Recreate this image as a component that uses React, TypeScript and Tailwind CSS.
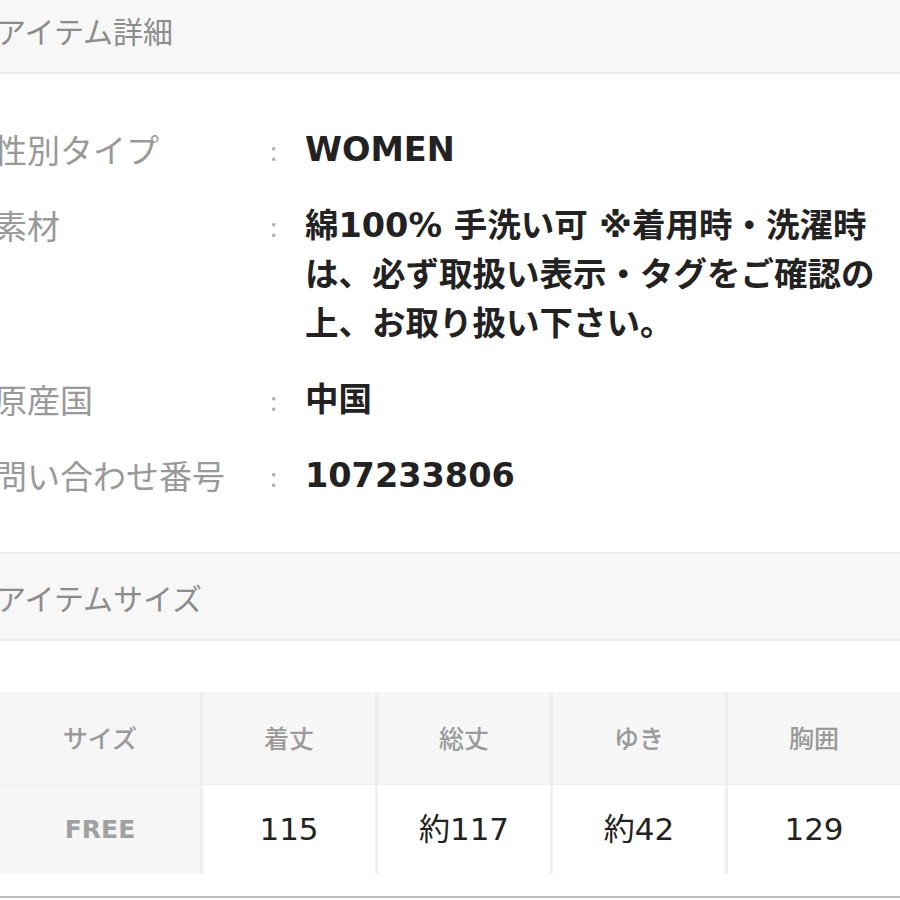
export default function App() {
  const details: { label: string; value: string[] }[] = [
    { label: "性別タイプ", value: ["WOMEN"] },
    {
      label: "素材",
      value: [
        "綿100% 手洗い可 ※着用時・洗濯時",
        "は、必ず取扱い表示・タグをご確認の",
        "上、お取り扱い下さい。",
      ],
    },
    { label: "原産国", value: ["中国"] },
    { label: "問い合わせ番号", value: ["107233806"] },
  ];

  const heads = ["サイズ", "着丈", "総丈", "ゆき", "胸囲"];
  const sizes = ["115", "約117", "約42", "129"];

  return (
    <div className="w-[900px] h-[900px] overflow-hidden bg-white font-['Noto_Sans_CJK_JP','Noto_Sans',sans-serif]">
      {/* Item details header */}
      <div className="flex h-[74px] items-center border-b-2 border-[#ececec] bg-[#f7f7f7]">
        <h2 className="-ml-[4px] -mt-[12px] text-[30px] leading-none text-[#8c8c8c]">アイテム詳細</h2>
      </div>

      <dl className="mt-[51px] flex flex-col gap-[27px]">
        {details.map((row) => (
          <div key={row.label} className="flex">
            <dt className="-ml-[6px] w-[276px] shrink-0 text-[33px] leading-[49px] text-[#999999]">{row.label}</dt>
            <span className="w-[35px] shrink-0 text-[26px] leading-[49px] text-[#b0b0b0]">:</span>
            <dd className="font-['DejaVu_Sans','Noto_Sans_CJK_JP',sans-serif] text-[33.5px] font-bold leading-[49px] text-[#222222]">
              {row.value.map((line) => (
                <div key={line} className="whitespace-nowrap">
                  {line}
                </div>
              ))}
            </dd>
          </div>
        ))}
      </dl>

      {/* Item size header */}
      <div className="mt-[52px] flex h-[89px] items-center border-y-2 border-[#ececec] bg-[#f7f7f7]">
        <h2 className="-ml-[4px] text-[30px] leading-none text-[#8c8c8c]">アイテムサイズ</h2>
      </div>

      <div className="mt-[51px] grid grid-cols-[200px_1fr_1fr_1fr_1fr] gap-x-[3px] gap-y-[1px] bg-[#efefef]">
        {heads.map((h) => (
          <div
            key={h}
            className="flex h-[92px] items-center justify-center bg-[#f6f6f6] text-[25px] font-medium text-[#9a9a9a]"
          >
            {h}
          </div>
        ))}
        <div className="flex h-[89px] items-center justify-center bg-[#f6f6f6] font-['DejaVu_Sans',sans-serif] text-[25px] font-bold text-[#a0a0a0]">
          FREE
        </div>
        {sizes.map((s) => (
          <div
            key={s}
            className="flex h-[89px] items-center justify-center bg-white font-['DejaVu_Sans','Noto_Sans_CJK_JP',sans-serif] text-[31px] text-[#222222]"
          >
            {s}
          </div>
        ))}
      </div>

      <div className="mt-[22px] border-b-2 border-[#bdbdbd]" />
    </div>
  );
}
